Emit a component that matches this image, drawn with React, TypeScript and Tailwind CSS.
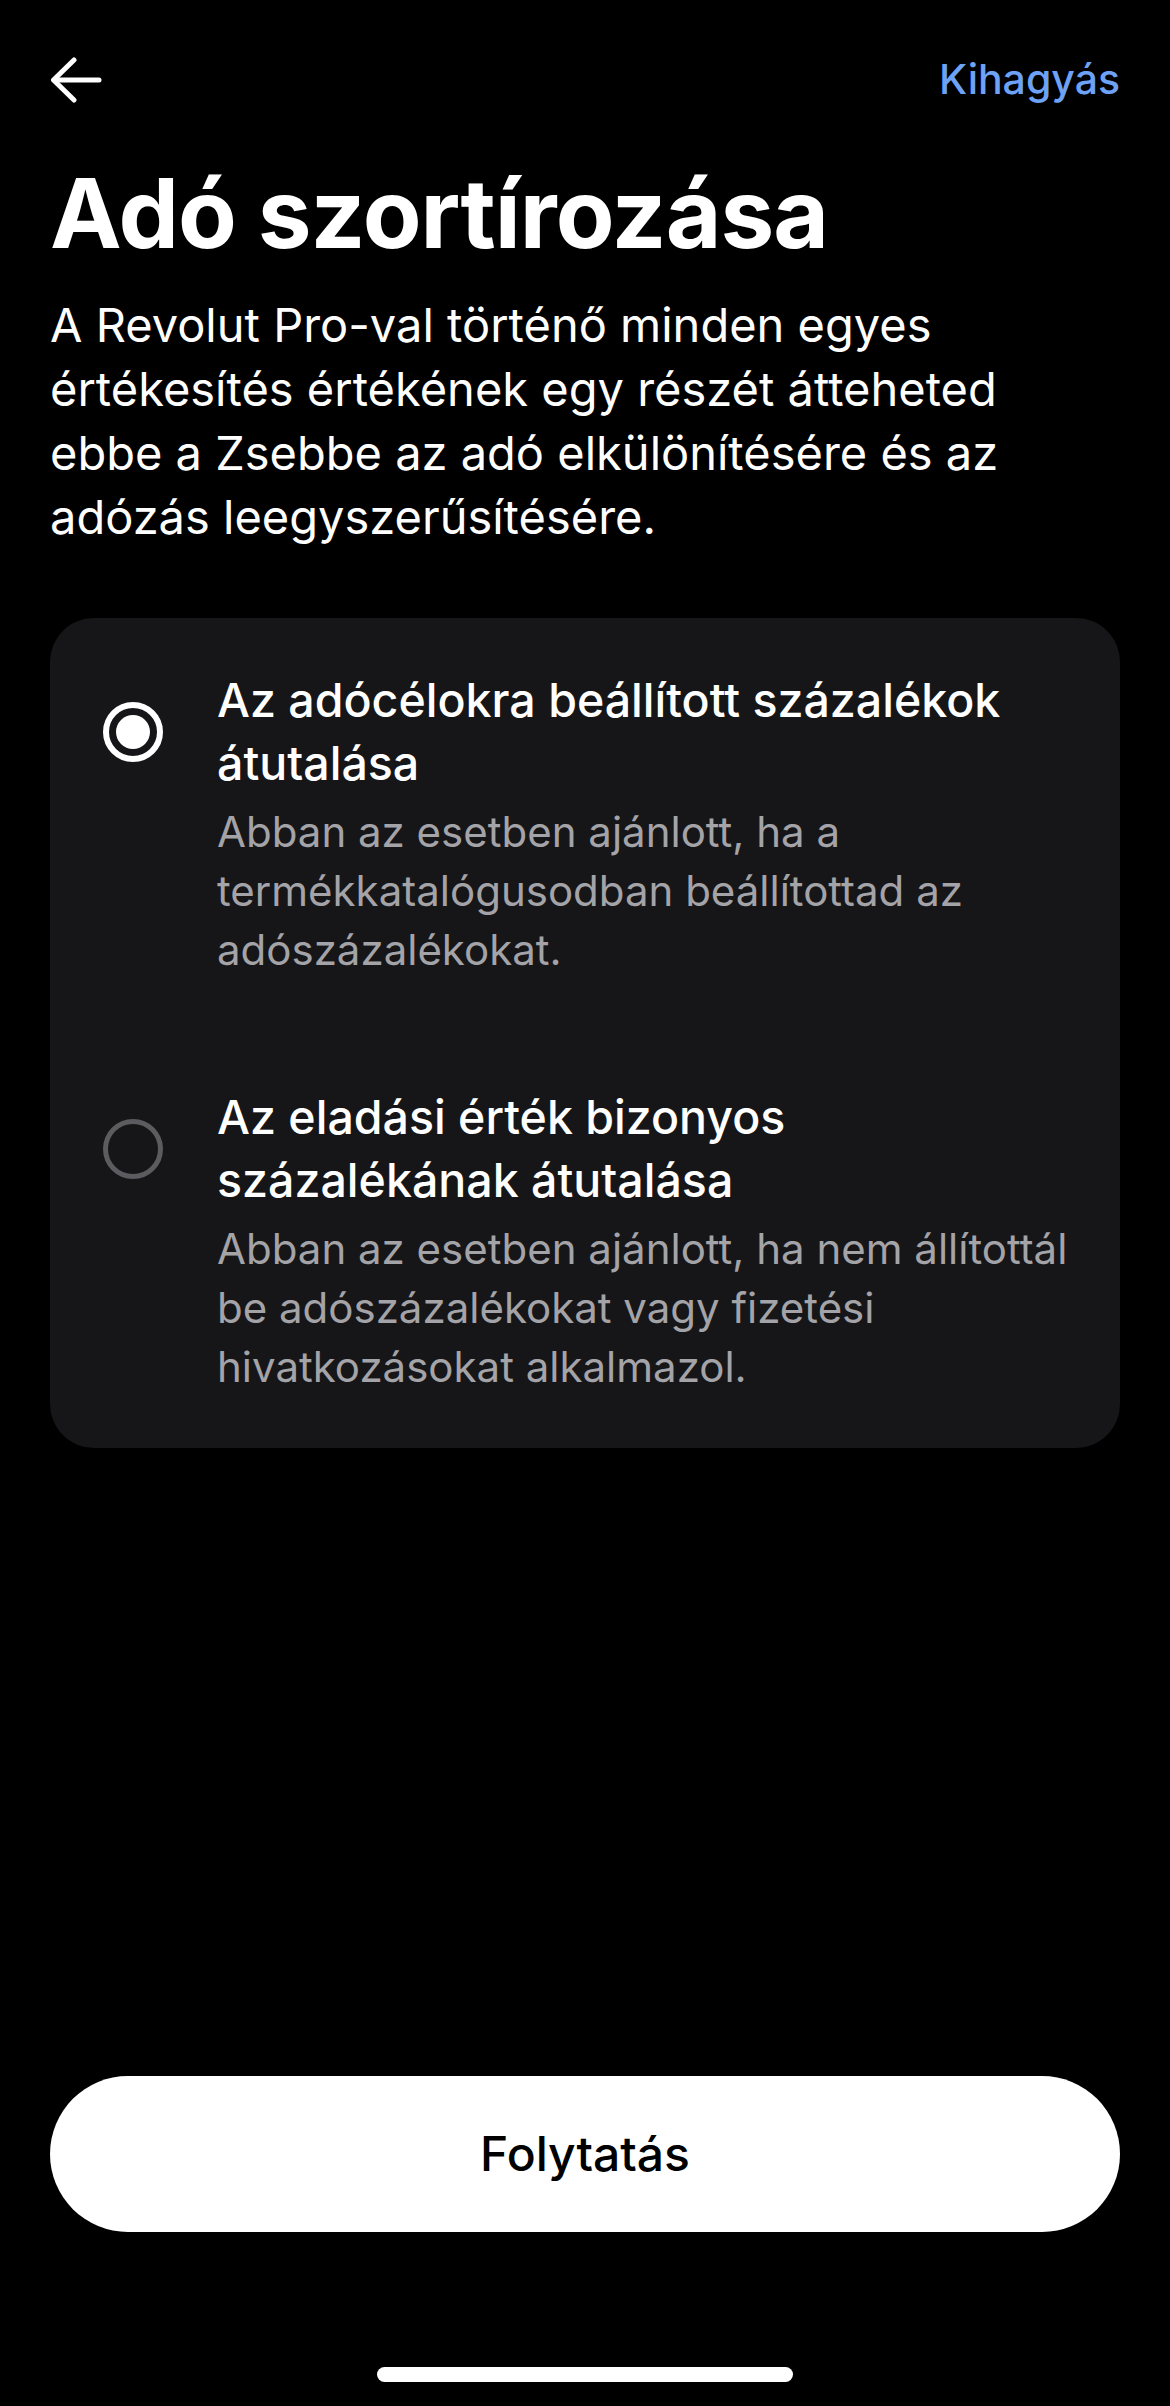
import type { ReactNode } from 'react'

const FONT = { fontFamily: 'Inter, "Noto Sans", sans-serif' }

interface OptionProps {
  selected?: boolean
  title: ReactNode
  description: ReactNode
}

function Radio({ selected }: { selected?: boolean }) {
  if (selected) {
    return (
      <span className="flex h-[60px] w-[60px] items-center justify-center rounded-full border-[6px] border-white">
        <span className="h-[34px] w-[34px] rounded-full bg-white" />
      </span>
    )
  }
  return <span className="block h-[60px] w-[60px] rounded-full border-[5px] border-[#5b5b60]" />
}

function Option({ selected, title, description }: OptionProps) {
  return (
    <div className="grid grid-cols-[60px_1fr] gap-x-[54px]">
      <div className="self-center">
        <Radio selected={selected} />
      </div>
      <div className="whitespace-nowrap text-[46.5px] font-medium leading-[63px] text-white">{title}</div>
      <div className="col-start-2 mt-[7px] whitespace-nowrap text-[42px] leading-[59px] text-[#a3a3a8]">
        {description}
      </div>
    </div>
  )
}

function BackArrow() {
  return (
    <svg
      xmlns="http://www.w3.org/2000/svg"
      viewBox="0 0 52 46"
      fill="none"
      stroke="currentColor"
      strokeWidth="5"
      strokeLinecap="round"
      strokeLinejoin="round"
      className="h-[46px] w-[52px] text-white"
    >
      <path d="M49 23H4" />
      <path d="M24 3L3.5 23L24 43" />
    </svg>
  )
}

export default function App() {
  return (
    <div className="flex h-[2406px] w-full flex-col bg-black px-[50px]" style={FONT}>
      <div className="mt-[50px] flex h-[60px] items-center justify-between">
        <BackArrow />
        <span className="text-[41px] font-medium text-[#6ea2f7]">Kihagyás</span>
      </div>

      <h1 className="mt-[51px] text-[96px] font-bold leading-[1.1] tracking-[-0.01em] text-white">
        Adó szortírozása
      </h1>

      <p className="mt-[26px] whitespace-nowrap text-[47px] leading-[64px] text-white">
        A Revolut Pro-val történő minden egyes
        <br />
        értékesítés értékének egy részét átteheted
        <br />
        ebbe a Zsebbe az adó elkülönítésére és az
        <br />
        adózás leegyszerűsítésére.
      </p>

      <div className="mt-[69px] flex flex-col gap-[107px] rounded-[44px] bg-[#161618] pb-[52px] pl-[53px] pr-[40px] pt-[51px]">
        <Option
          selected
          title={
            <>
              Az adócélokra beállított százalékok
              <br />
              átutalása
            </>
          }
          description={
            <>
              Abban az esetben ajánlott, ha a
              <br />
              termékkatalógusodban beállítottad az
              <br />
              adószázalékokat.
            </>
          }
        />
        <Option
          title={
            <>
              Az eladási érték bizonyos
              <br />
              százalékának átutalása
            </>
          }
          description={
            <>
              Abban az esetben ajánlott, ha nem állítottál
              <br />
              be adószázalékokat vagy fizetési
              <br />
              hivatkozásokat alkalmazol.
            </>
          }
        />
      </div>

      <div className="flex-1" />

      <button className="flex h-[156px] w-full items-center justify-center rounded-full bg-white text-[48px] font-medium text-black">
        Folytatás
      </button>

      <div className="mb-[24px] mt-[135px] flex justify-center">
        <span className="h-[15px] w-[416px] rounded-full bg-white" />
      </div>
    </div>
  )
}
